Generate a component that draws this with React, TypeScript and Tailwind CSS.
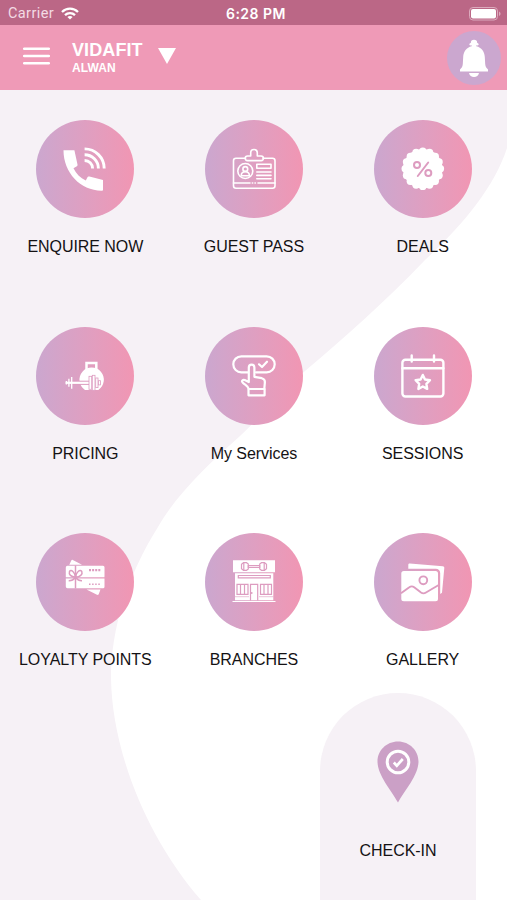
import React from 'react';

const PINK = '#dd9cc0';

const PhoneIcon = () => (
  <>
    <path
      d="M27.500 30.200H38.400L41.500 44.600C41.700 45.600 41.200 46.200 40.400 46.600L37.500 48.200C40 53.500 44.300 57.800 49.800 60.600L51.200 57.800C51.600 56.900 52.400 56.400 53.400 56.600L67 60V70.600C45 71.400 27.500 53 27.500 30.200Z"
      fill="white"
    />
    <g fill="none" stroke="white" strokeWidth="2.900">
      <path d="M48.600 28.900A19.600 19.600 0 0 1 68.200 48.500" />
      <path d="M48.600 34.700A13.800 13.800 0 0 1 62.400 48.500" />
      <path d="M48.600 40.500A8 8 0 0 1 56.600 48.500" />
    </g>
  </>
);

const PassIcon = () => (
  <g fill="none" stroke="white" strokeWidth="1.600" strokeLinecap="round" strokeLinejoin="round">
    <path d="M40.500 38.200H31a2.500 2.500 0 0 0-2.500 2.500V65.700a2.500 2.500 0 0 0 2.500 2.500H67.500a2.500 2.500 0 0 0 2.500-2.500V40.700a2.500 2.500 0 0 0-2.500-2.500H58" />
    <path d="M42.500 36H45.700V32.800a3.300 3.300 0 0 1 6.600 0V36h3.800a2.300 2.300 0 0 1 0 4.600H42.500a2.300 2.300 0 0 1 0-4.600Z" />
    <circle cx="40.300" cy="51" r="7.500" />
    <circle cx="40.300" cy="49" r="2.400" />
    <path d="M36.300 55.800v-.8a4 3.400 0 0 1 8 0v.8Z" />
    <path d="M51.800 44.200H66v4H51.800Z" />
    <path d="M51.800 52H66M51.800 55.400H66M51.800 58.800H66" />
    <path d="M28.500 63H45M47.300 63h.4M50 63h.4M53 63H70" />
  </g>
);

const DealsIcon = () => (
  <>
    <g fill="white">
      <circle cx="48.800" cy="48.800" r="19.700" />
      {Array.from({ length: 16 }, (_, i) => {
        const a = ((i * 22.5) / 180) * Math.PI;
        return <circle key={i} cx={48.8 + Math.cos(a) * 17.6} cy={48.8 + Math.sin(a) * 17.6} r="3.700" />;
      })}
    </g>
    <g fill="none" stroke={PINK} strokeWidth="2" strokeLinecap="round">
      <circle cx="43" cy="45" r="3" />
      <circle cx="54.300" cy="52.900" r="3" />
      <path d="M54.200 42.500L43.800 56" />
    </g>
  </>
);

const PricingIcon = () => (
  <>
    <path d="M50.500 44V36H60.300V44" fill="none" stroke="white" strokeWidth="2.500" />
    <path d="M49 62.900A12.200 12.200 0 1 1 62.300 62.900Z" fill="white" />
    <path d="M36 55.800H54" stroke={PINK} strokeWidth="4.200" />
    <path d="M29.600 55.800H54" stroke="white" strokeWidth="2.200" />
    <path d="M30.400 54V57.600M32.900 51.800V59.800M35.700 50V61.700" stroke="white" strokeWidth="1.300" />
    <g fill="white" stroke={PINK} strokeWidth=".8">
      <rect x="53" y="49.300" width="2.700" height="13" />
      <rect x="56.300" y="48.300" width="2.700" height="15" />
      <rect x="59.700" y="51" width="2.300" height="9.600" />
      <rect x="62.500" y="53.700" width="2" height="4.200" />
    </g>
  </>
);

const ServicesIcon = () => (
  <g fill="none" stroke="white" strokeWidth="2.200" strokeLinejoin="round" strokeLinecap="round">
    <path d="M43 45.300H36.300a8 8 0 0 1 0-16H61.700a8 8 0 0 1 0 16H51" />
    <path d="M54 37.300L57 40L62 34.700" />
    <path d="M43.700 61.800C43.300 59.500 40.500 58.200 37.800 55.700C36 54 38 52.200 39.700 53L43.800 55V40.500a2.800 2.800 0 0 1 5.600 0V49.800L56.800 51.200C59 51.700 60 53 59.900 55.200L59.300 61.800" />
    <path d="M43.500 62H59.600V68.300H43.500Z" />
  </g>
);

const SessionsIcon = () => (
  <g fill="none" stroke="white" strokeWidth="2.400" strokeLinejoin="round" strokeLinecap="round">
    <rect x="28.400" y="32.800" width="41" height="36.700" rx="3" />
    <path d="M28.400 41.300H69.400M37.700 28.500V34.500M60 28.500V34.500" />
    <path d="M48.800 47.900L51 52.500L56 53.200L52.400 56.800L53.200 61.900L48.800 59.500L44.400 61.900L45.200 56.800L41.600 53.200L46.600 52.500Z" />
  </g>
);

const LoyaltyIcon = () => (
  <>
    <g fill="white">
      <path d="M33.300 31.800L35.300 27.500C35.600 26.800 36.200 26.700 36.800 27L46 31.800Z" />
      <path d="M50.500 56.500H64.500L62.800 61C62.500 61.800 61.800 62.200 61 61.800Z" />
      <path d="M31.500 32.800H67a1.500 1.500 0 0 1 1.500 1.500V43.300a2 2 0 0 0 0 1H29.800V34.500a1.700 1.700 0 0 1 1.700-1.700Z" />
      <path d="M29.800 45.600H68.500V53.800a1.500 1.500 0 0 1-1.500 1.500H31.500a1.700 1.700 0 0 1-1.700-1.700Z" />
    </g>
    <g fill="none" stroke={PINK} strokeWidth="1.500">
      <path d="M39.500 32.500V55.500" />
      <path d="M39.500 44.200C35 44 32.500 41.500 33.500 38.500C35 36 39 39 39.500 44.200C40 39 44 36 45.800 38.500C47 41.500 44 44 39.500 44.200Z" />
      <path d="M38.800 45C37.500 47 35.500 47.800 32.700 47.700M40.200 45C41.500 47 43.500 47.800 46 47.700" />
    </g>
    <path d="M53 37.200H65" stroke={PINK} strokeWidth="2.300" strokeDasharray="2 1.100" />
    <path d="M53 51.200H65" stroke={PINK} strokeWidth="1.500" strokeDasharray="1.500 1.600" />
  </>
);

const BranchesIcon = () => (
  <>
    <g fill="white">
      <path d="M28 27.300H70V39.200H28ZM30 40.300H68.300V67.300H30ZM27.500 67.900H70.500V68.900H27.500Z" />
    </g>
    <g fill="none" stroke={PINK} strokeWidth="1.200">
      <path d="M43.300 32.500H54.700V34.300H43.300Z" />
      <path d="M38.500 29.700H41.500L43.300 31V36L41.500 37.300H38.500L36.500 35.800V31.200Z" />
      <path d="M59.500 29.700H56.500L54.700 31V36L56.500 37.300H59.500L61.500 35.800V31.200Z" />
      <path d="M38.800 29.700V37.300M59.200 29.700V37.300" />
      <path d="M33.300 42.500H65.300V44.800H33.300Z" />
      <path d="M32 51.300H43V61.300H32ZM35.500 51.300V61.300M39.500 51.300V61.300" />
      <path d="M55.500 51.300H66.500V61.300H55.500ZM59 51.300V61.300M63 51.300V61.300" />
      <path d="M45.500 67.400V51.300H52.700V67.400M46.800 59v2" />
      <path d="M30 63.700H44M54 63.700H68.500" strokeWidth=".6" />
    </g>
  </>
);

const GalleryIcon = () => (
  <>
    <path
      d="M34.300 35.800V31.500C34.400 30.700 35 30.300 35.800 30.400L68.800 33.200C69.800 33.300 70.400 34 70.300 35L68 59.800L66.200 61V40.200C66.200 37.500 64.300 35.800 61.800 35.800Z"
      fill="white"
    />
    <rect x="27.300" y="38" width="36.700" height="30.300" rx="2.500" fill="white" />
    <g fill="none" stroke={PINK} strokeWidth="1.900">
      <circle cx="49.300" cy="47.300" r="3.900" />
      <path d="M27 60.300L35.300 54.300C37 53 38.500 53 40.200 54.300L47 59.500C48.700 60.700 50.200 60.700 52 59.500L64.300 52.300" />
    </g>
  </>
);

const tiles = [
  { label: 'ENQUIRE NOW', icon: <PhoneIcon /> },
  { label: 'GUEST PASS', icon: <PassIcon /> },
  { label: 'DEALS', icon: <DealsIcon /> },
  { label: 'PRICING', icon: <PricingIcon /> },
  { label: 'My Services', icon: <ServicesIcon /> },
  { label: 'SESSIONS', icon: <SessionsIcon /> },
  { label: 'LOYALTY POINTS', icon: <LoyaltyIcon /> },
  { label: 'BRANCHES', icon: <BranchesIcon /> },
  { label: 'GALLERY', icon: <GalleryIcon /> },
];

const Tile: React.FC<{ label: string; icon: React.ReactNode }> = ({ label, icon }) => (
  <button className="flex flex-col items-center">
    <span className="w-[98px] h-[98px] rounded-full bg-linear-to-r from-[#cba7cf] to-[#f196b3]">
      <svg viewBox="0 0 98 98" className="w-full h-full">{icon}</svg>
    </span>
    <span className="mt-[17px] text-base leading-6 tracking-[-0.05px] text-[#141214] whitespace-nowrap">{label}</span>
  </button>
);

const StatusBar = () => (
  <div className="h-[25px] bg-[#bb6786] text-white grid grid-cols-3 items-center pl-[8px] pr-[6px] pt-[2px]">
    <div className="flex items-center gap-[7px] text-[#f3dbe4]">
      <span className="font-[Roboto] text-[14.5px] leading-5 tracking-[0.4px]">Carrier</span>
      <svg viewBox="0 0 18 13" className="w-[18px] h-[13px]" fill="none" stroke="white" strokeWidth="2.300">
        <path d="M1 5C5.500 .6 12.500 .6 17 5" />
        <path d="M4 8.200C6.800 5.500 11.200 5.500 14 8.200" />
        <path d="M9 12.500L6.400 9.900C7.900 8.600 10.100 8.600 11.600 9.900Z" fill="white" stroke="none" />
      </svg>
    </div>
    <div className="font-[Inter] text-[14px] leading-5 font-semibold tracking-[0.5px] text-center pl-[3px]">6:28 PM</div>
    <div className="flex justify-end">
      <svg viewBox="0 0 32 14" className="w-[32px] h-[14px]">
        <rect x=".5" y=".5" width="28" height="12.500" rx="3.500" fill="none" stroke="#dcaabd" />
        <rect x="2" y="2" width="25" height="9.500" rx="2" fill="white" />
        <path d="M30 4.500c2 .8 2 3.700 0 4.500Z" fill="#dcaabd" />
      </svg>
    </div>
  </div>
);

const Header = () => (
  <header className="h-[65px] bg-[#ef9ab7] text-white flex items-center pl-[23px] pr-[6px]">
    <button className="mb-[3px]" aria-label="Menu">
      <svg viewBox="0 0 27 18" className="block w-[27px] h-[18px]" stroke="white" strokeWidth="2.500" strokeLinecap="round">
        <path d="M1.200 1.700H25.800M1.200 9H25.800M1.200 16.300H25.800" />
      </svg>
    </button>
    <div className="ml-[22px] pt-[1px]">
      <div className="font-bold text-[18px] leading-5 tracking-[0.1px]">VIDAFIT</div>
      <div className="font-bold text-[12px] leading-4 tracking-[0.1px]">ALWAN</div>
    </div>
    <svg viewBox="0 0 18 16" className="w-[18px] h-[16px] ml-[15px] mb-[4px]">
      <path d="M0 0H18L9 16Z" fill="white" />
    </svg>
    <div className="ml-auto w-[54px] h-[54px] rounded-full bg-[#cba7cf]">
      <svg viewBox="0 0 54 54" className="w-full h-full" fill="white">
        <circle cx="27" cy="12" r="3.200" />
        <circle cx="23.800" cy="13.200" r="1.300" />
        <circle cx="30.200" cy="13.200" r="1.300" />
        <path d="M25.500 13H28.500L29.300 15.200C34.500 16.500 37.500 20.500 37.800 26L38.200 33C38.400 35.500 39.300 37 41 38.500V40.500H13V38.500C14.700 37 15.600 35.500 15.800 33L16.200 26C16.500 20.500 19.500 16.500 24.700 15.200Z" />
        <path d="M22 42H32C31.500 44.500 29.500 45.900 27 45.900S22.500 44.500 22 42Z" />
      </svg>
    </div>
  </header>
);

const App: React.FC = () => {
  return (
    <div className="w-[507px] h-[900px] flex flex-col overflow-hidden font-['Liberation_Sans',sans-serif]">
      <StatusBar />
      <Header />

      <main className="relative flex-1 flex flex-col bg-[#f6f1f6]">
        {/* Background wave */}
        <svg viewBox="0 0 507 810" className="absolute inset-0 w-full h-full">
          <path
            d="M507 58C494 98 462 136 425 170C385 212 345 247 305 281C280 302 265 323 240 346C205 377 175 407 158 437C127 486 111 540 111 588C112 660 146 747 201 810H507Z"
            fill="white"
          />
        </svg>

        <div className="relative grid grid-cols-3 gap-y-[67.500px] pt-[30px] pl-[1px]">
          {tiles.map((tile) => (
            <Tile key={tile.label} label={tile.label} icon={tile.icon} />
          ))}
        </div>

        {/* Check-in */}
        <button className="relative mt-auto ml-auto mr-[31px] w-[156px] h-[207px] rounded-t-full bg-[#f6f1f6] flex flex-col items-center pt-[48px]">
          <svg viewBox="0 0 42 62" className="w-[42px] h-[62px]">
            <path d="M21 .5C32.500 .5 41.500 9.500 41.500 20.500C41.500 34 28 49 21 61.500C14 49 .5 34 .5 20.500C.5 9.500 9.500 .5 21 .5Z" fill="#cba0c6" />
            <circle cx="21" cy="21" r="10.800" fill="none" stroke="white" strokeWidth="3" />
            <path d="M16.800 21.500L19.800 24.700L25.800 18" fill="none" stroke="white" strokeWidth="2.700" />
          </svg>
          <span className="mt-[36px] text-base leading-6 tracking-[-0.05px] text-[#141214]">CHECK-IN</span>
        </button>
      </main>
    </div>
  );
};

export default App;
